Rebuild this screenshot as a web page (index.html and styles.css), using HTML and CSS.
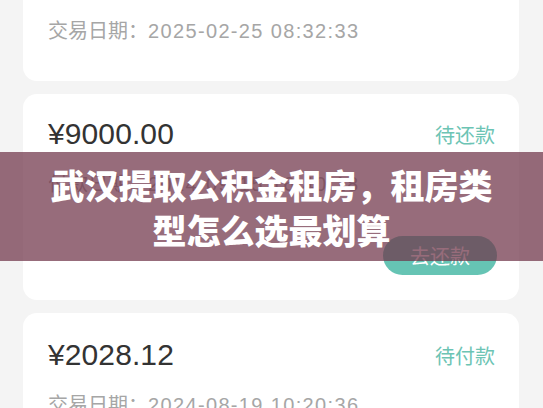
FILE: index.html
```html
<!DOCTYPE html>
<html lang="zh-CN">
<head>
<meta charset="utf-8">
<title>武汉提取公积金租房，租房类型怎么选最划算</title>
<link rel="stylesheet" href="styles.css">
</head>
<body>
<div class="page">
  <div class="list">
    <div class="card card-done">
      <div class="row">
        <span class="amount">¥3500.00</span>
        <span class="status">已还款</span>
      </div>
      <div class="date">交易日期：<span class="num">2025-02-25 08:32:33</span></div>
    </div>
    <div class="card">
      <div class="row">
        <span class="amount">¥9000.00</span>
        <span class="status">待还款</span>
      </div>
      <div class="date">付款日期：<span class="num">2024-09-15 16:40:18</span></div>
      <div class="actions"><button class="btn">去还款</button></div>
    </div>
    <div class="card card-last">
      <div class="row">
        <span class="amount">¥2028.12</span>
        <span class="status">待付款</span>
      </div>
      <div class="date">交易日期：<span class="num">2024-08-19 10:20:36</span></div>
    </div>
  </div>
  <div class="banner">
    <h1 class="title">武汉提取公积金租房，租房类<br>型怎么选最划算</h1>
  </div>
</div>
</body>
</html>
```

FILE: styles.css
```css
* { box-sizing: border-box; }
html, body {
  margin: 0;
  padding: 0;
  background: #f4f4f4;
  font-family: "Liberation Sans", "Noto Sans CJK SC", sans-serif;
}
.page {
  position: relative;
  width: 543px;
  height: 408px;
  overflow: hidden;
}
.list {
  display: flex;
  flex-direction: column;
  gap: 13px;
  padding: 0 24px 0 23px;
  margin-top: -59px;
}
.card {
  background: #ffffff;
  border-radius: 14px;
  padding: 24px 24px 25px 25px;
  display: flex;
  flex-direction: column;
}
.card-done { padding-bottom: 37px; }
.card-last { padding-top: 26px; }
.row {
  display: flex;
  justify-content: space-between;
  align-items: center;
  height: 32px;
}
.amount {
  font-size: 30px;
  color: #333333;
  letter-spacing: 0.1px;
}
.status {
  font-size: 20px;
  color: #6cc4b4;
  font-family: "Noto Sans CJK SC", sans-serif;
}
.date {
  margin-top: 19px;
  font-size: 20px;
  line-height: 28px;
  height: 28px;
  color: #a6a6a6;
  font-family: "Noto Sans CJK SC", sans-serif;
  white-space: nowrap;
}
.date .num {
  font-family: "Liberation Sans", sans-serif;
  letter-spacing: 1.35px;
}
.actions {
  display: flex;
  justify-content: flex-end;
  margin-top: 39px;
}
.btn {
  width: 114px;
  height: 39px;
  border: none;
  border-radius: 20px;
  background: #66c4b4;
  color: #ffffff;
  font-size: 20px;
  font-family: "Noto Sans CJK SC", sans-serif;
  padding: 0;
  margin-right: -2px;
}
.banner {
  position: absolute;
  left: 0;
  top: 152px;
  width: 543px;
  height: 109px;
  background: rgba(113, 54, 74, 0.73);
  display: flex;
  align-items: center;
  justify-content: center;
}
.title {
  margin: 0;
  color: #ffffff;
  font-family: "Noto Sans CJK SC", sans-serif;
  font-weight: 900;
  font-size: 34px;
  line-height: 45px;
  text-align: center;
  letter-spacing: 0;
}
```
